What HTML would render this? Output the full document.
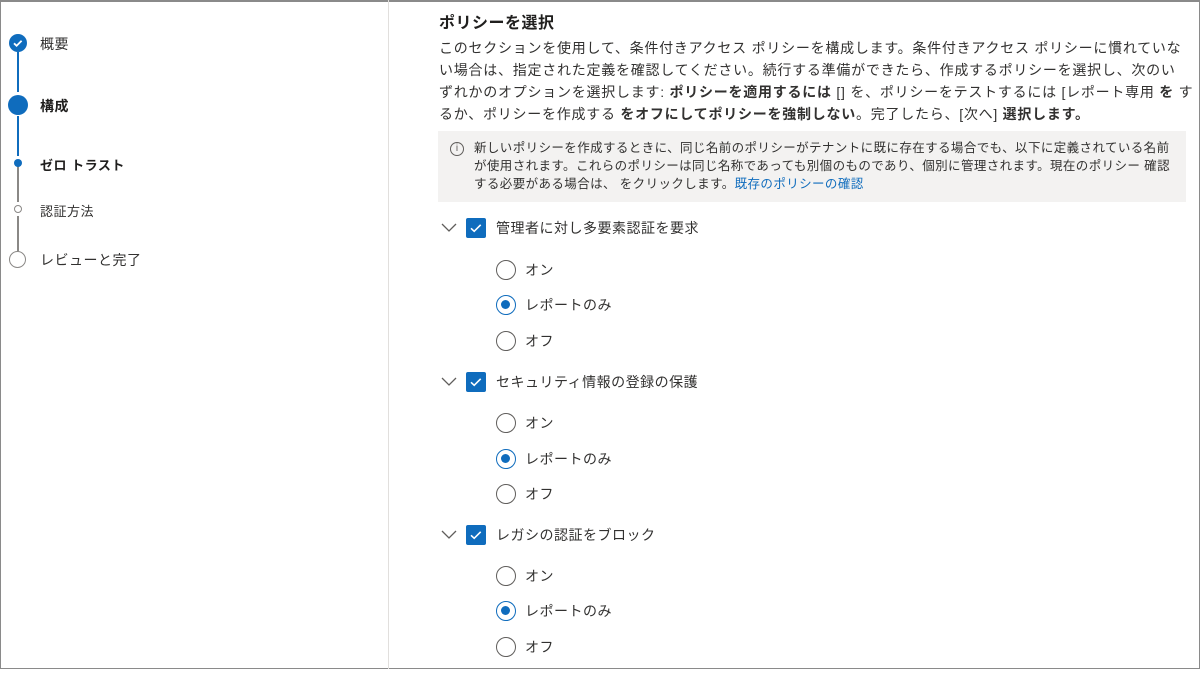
<!DOCTYPE html>
<html><head><meta charset="utf-8"><style>
*{margin:0;padding:0;box-sizing:border-box}
body{width:1200px;height:669px;overflow:hidden;background:#fff;font-family:"Liberation Sans","Noto Sans CJK JP",sans-serif;color:#323130;position:relative}
.frame{position:absolute;left:0;top:0;width:1200px;height:669px;border:1px solid #8a8a8a;border-top:2px solid #8a8a8a}
.div{position:absolute;left:388px;top:0;width:1px;height:669px;background:#e1dfdd}
.abs{position:absolute}
.step{position:absolute;left:40px;font-size:14px;white-space:nowrap;letter-spacing:0.5px}
.line{position:absolute;left:17px;width:2px}
h2{position:absolute;left:439px;top:9px;font-size:16px;font-weight:bold;color:#201f1e;letter-spacing:0.5px}
.p{position:absolute;left:439px;top:37px;width:760px;font-size:14px;line-height:22px;color:#323130;white-space:nowrap;letter-spacing:0.75px}
.info{position:absolute;left:438px;top:131px;width:748px;height:71px;background:#f3f2f1;padding:8px 0 0 36px;font-size:12.5px;line-height:18px;color:#323130;white-space:nowrap;letter-spacing:0.4px}
.info a{color:#0f6cbd;text-decoration:none}
.ic{position:absolute;left:12px;top:11px;width:14px;height:14px;border:1px solid #605e5c;border-radius:50%;font-size:10px;line-height:12px;text-align:center;color:#605e5c;letter-spacing:0}
.sec{position:absolute;left:439px;width:400px;height:150px}
.chev{position:absolute;left:2px;top:-6px}
.cb{position:absolute;left:27px;top:-10px;width:20px;height:20px;background:#0f6cbd;border-radius:2px}
.lbl{position:absolute;left:57px;top:-10px;font-size:14px;line-height:20px;white-space:nowrap;letter-spacing:0.5px}
.r{position:absolute;left:57px;width:20px;height:20px;border:1.5px solid #605e5c;border-radius:50%}
.r.on{border-color:#0f6cbd}
.r.on::after{content:"";position:absolute;left:4px;top:4px;width:9px;height:9px;border-radius:50%;background:#0f6cbd}
.rl{position:absolute;left:86px;font-size:14px;line-height:20px;white-space:nowrap;letter-spacing:0.5px}
</style></head><body>
<div class="frame"></div>
<div class="div"></div>
<div class="line" style="top:52px;height:40px;background:#0f6cbd"></div>
<div class="line" style="top:116px;height:40px;background:#0f6cbd"></div>
<div class="line" style="top:166px;height:36px;background:#8a8886"></div>
<div class="line" style="top:216px;height:35px;background:#8a8886"></div>
<div class="abs" style="left:9px;top:34px;width:18px;height:18px;border-radius:50%;background:#0f6cbd"><svg width="18" height="18"><path d="M5 9.3l2.6 2.5 5-5" stroke="#fff" stroke-width="1.8" fill="none"/></svg></div>
<div class="abs" style="left:8px;top:95px;width:20px;height:20px;border-radius:50%;background:#0f6cbd"></div>
<div class="abs" style="left:14px;top:159px;width:8px;height:8px;border-radius:50%;background:#0f6cbd"></div>
<div class="abs" style="left:14px;top:205px;width:8px;height:8px;border-radius:50%;border:1.5px solid #8a8886"></div>
<div class="abs" style="left:9px;top:251px;width:17px;height:17px;border-radius:50%;border:1.5px solid #8a8886"></div>
<div class="step" style="top:34px">概要</div>
<div class="step" style="top:96px;font-weight:bold;color:#201f1e">構成</div>
<div class="step" style="top:155px;font-size:13px;font-weight:bold;color:#201f1e">ゼロ トラスト</div>
<div class="step" style="top:201px;font-size:13px">認証方法</div>
<div class="step" style="top:250px">レビューと完了</div>

<h2>ポリシーを選択</h2>
<div class="p">このセクションを使用して、条件付きアクセス ポリシーを構成します。条件付きアクセス ポリシーに慣れていな<br>い場合は、指定された定義を確認してください。続行する準備ができたら、作成するポリシーを選択し、次のい<br>ずれかのオプションを選択します: <b>ポリシーを適用するには</b> [] を、ポリシーをテストするには [レポート専用 <b>を</b> す<br>るか、ポリシーを作成する <b>をオフにしてポリシーを強制しない</b>。完了したら、[次へ] <b>選択します。</b></div>
<div class="info"><div class="ic">i</div>新しいポリシーを作成するときに、同じ名前のポリシーがテナントに既に存在する場合でも、以下に定義されている名前<br>が使用されます。これらのポリシーは同じ名称であっても別個のものであり、個別に管理されます。現在のポリシー 確認<br>する必要がある場合は、 をクリックします。<a>既存のポリシーの確認</a></div>

<div class="sec" style="top:228px">
<svg class="chev" width="16" height="12"><path d="M1 2l7 7 7-7" stroke="#605e5c" stroke-width="1.3" fill="none"/></svg>
<div class="cb"><svg width="20" height="20"><path d="M5 10.3l3.2 3 6.5-6.5" stroke="#fff" stroke-width="1.6" fill="none"/></svg></div>
<div class="lbl">管理者に対し多要素認証を要求</div>
<div class="r" style="top:32px"></div><div class="rl" style="top:32px">オン</div>
<div class="r on" style="top:67px"></div><div class="rl" style="top:67px">レポートのみ</div>
<div class="r" style="top:103px"></div><div class="rl" style="top:103px">オフ</div>
</div>
<div class="sec" style="top:382px">
<svg class="chev" width="16" height="12"><path d="M1 2l7 7 7-7" stroke="#605e5c" stroke-width="1.3" fill="none"/></svg>
<div class="cb"><svg width="20" height="20"><path d="M5 10.3l3.2 3 6.5-6.5" stroke="#fff" stroke-width="1.6" fill="none"/></svg></div>
<div class="lbl">セキュリティ情報の登録の保護</div>
<div class="r" style="top:31px"></div><div class="rl" style="top:31px">オン</div>
<div class="r on" style="top:67px"></div><div class="rl" style="top:67px">レポートのみ</div>
<div class="r" style="top:102px"></div><div class="rl" style="top:102px">オフ</div>
</div>
<div class="sec" style="top:535px">
<svg class="chev" width="16" height="12"><path d="M1 2l7 7 7-7" stroke="#605e5c" stroke-width="1.3" fill="none"/></svg>
<div class="cb"><svg width="20" height="20"><path d="M5 10.3l3.2 3 6.5-6.5" stroke="#fff" stroke-width="1.6" fill="none"/></svg></div>
<div class="lbl">レガシの認証をブロック</div>
<div class="r" style="top:31px"></div><div class="rl" style="top:31px">オン</div>
<div class="r on" style="top:66px"></div><div class="rl" style="top:66px">レポートのみ</div>
<div class="r" style="top:102px"></div><div class="rl" style="top:102px">オフ</div>
</div>
</body></html>
